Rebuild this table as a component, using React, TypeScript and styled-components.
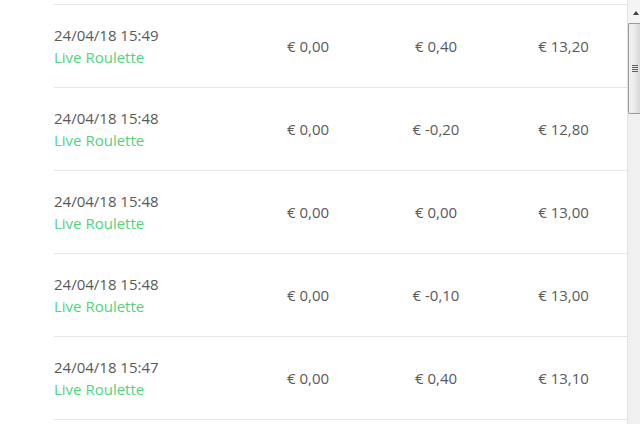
import React, { FC } from 'react';
import styled, { createGlobalStyle } from 'styled-components';

const GlobalStyle = createGlobalStyle`
  html, body {
    margin: 0;
    padding: 0;
    background: #fff;
  }
  body {
    font-family: "Open Sans", "Liberation Sans", sans-serif;
    overflow: hidden;
  }
`;

const Page = styled.div`
  display: flex;
  width: 640px;
  height: 424px;
  overflow: hidden;
`;

const Content = styled.div`
  flex: 1;
  padding: 4px 0 0 54px;
`;

const Table = styled.div`
  display: flex;
  flex-direction: column;
  border-bottom: 1px solid #e6e6e6;
`;

const Row = styled.div`
  display: grid;
  grid-template-columns: 190px 128px 128px 127px;
  align-items: center;
  height: 82px;
  border-top: 1px solid #e6e6e6;
`;

const Info = styled.div`
  display: flex;
  flex-direction: column;
  font-size: 15px;
  line-height: 22px;
`;

const Date = styled.span`
  color: #595959;
`;

const Game = styled.span`
  color: #50d380;
`;

const Amount = styled.div`
  text-align: center;
  font-size: 15px;
  color: #595959;
`;

const Scrollbar = styled.div`
  width: 13px;
  display: flex;
  flex-direction: column;
  background: #f0f0f0;
  border-left: 1px solid #e2e2e2;
`;

const ArrowButton = styled.div`
  height: 23px;
  display: flex;
  align-items: center;
  justify-content: flex-end;
  padding-right: 1px;
  background: #f4f4f4;
`;

const Arrow = styled.div`
  width: 0;
  height: 0;
  border-left: 3px solid transparent;
  border-right: 3px solid transparent;
  border-bottom: 4px solid #404040;
  margin-top: 2px;
`;

const Thumb = styled.div`
  height: 91px;
  box-sizing: border-box;
  border: 1px solid #9a9a9a;
  border-right: none;
  border-radius: 2px 0 0 2px;
  background: linear-gradient(to right, #f3f3f3 0%, #e9e9e9 50%, #d7d7d7 100%);
  display: flex;
  flex-direction: column;
  justify-content: center;
  align-items: flex-end;
  gap: 1px;
  padding-right: 2px;
`;

const Grip = styled.div`
  width: 6px;
  height: 1px;
  background: #606060;
`;

type Entry = { date: string; win: string; diff: string; balance: string };

const entries: Entry[] = [
  { date: '24/04/18 15:49', win: '€ 0,00', diff: '€ 0,40', balance: '€ 13,20' },
  { date: '24/04/18 15:48', win: '€ 0,00', diff: '€ -0,20', balance: '€ 12,80' },
  { date: '24/04/18 15:48', win: '€ 0,00', diff: '€ 0,00', balance: '€ 13,00' },
  { date: '24/04/18 15:48', win: '€ 0,00', diff: '€ -0,10', balance: '€ 13,00' },
  { date: '24/04/18 15:47', win: '€ 0,00', diff: '€ 0,40', balance: '€ 13,10' },
];

const App: FC = () => {
  return (
    <>
      <GlobalStyle />
      <Page>
        <Content>
          <Table>
            {entries.map((e, i) => (
              <Row key={i}>
                <Info>
                  <Date>{e.date}</Date>
                  <Game>Live Roulette</Game>
                </Info>
                <Amount>{e.win}</Amount>
                <Amount>{e.diff}</Amount>
                <Amount>{e.balance}</Amount>
              </Row>
            ))}
          </Table>
        </Content>
        <Scrollbar>
          <ArrowButton>
            <Arrow />
          </ArrowButton>
          <Thumb>
            <Grip />
            <Grip />
            <Grip />
            <Grip />
          </Thumb>
        </Scrollbar>
      </Page>
    </>
  );
};

export default App;
